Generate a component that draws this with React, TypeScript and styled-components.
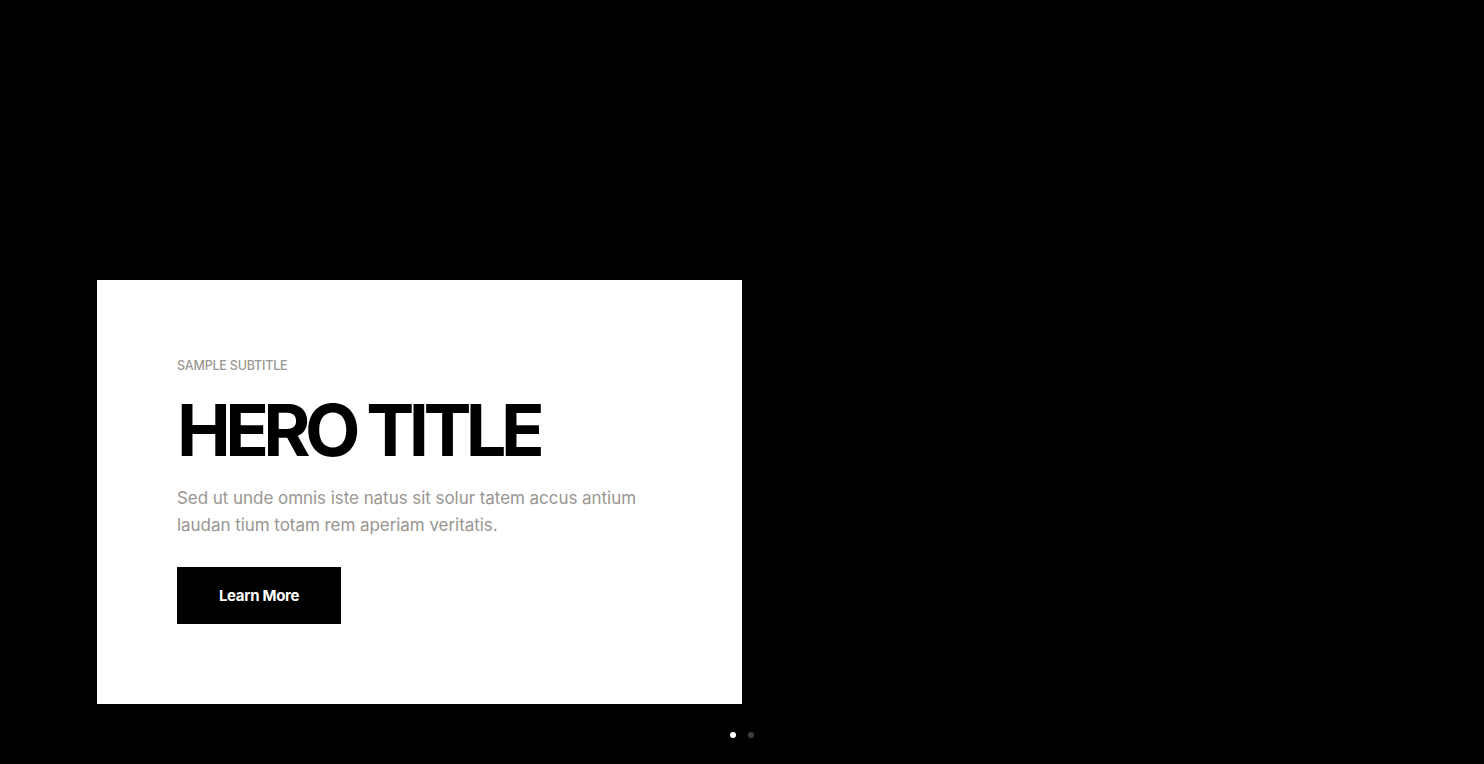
import React from "react";
import styled, { createGlobalStyle } from "styled-components";

const Global = createGlobalStyle`
  html, body { margin: 0; padding: 0; background: #000; }
  body { font-family: Inter, "Noto Sans", Arial, sans-serif; }
  * { box-sizing: border-box; }
`;

const Hero = styled.section`
  width: 1484px;
  height: 764px;
  background: #000;
  display: flex;
  flex-direction: column;
  padding: 280px 0 0 97px;
`;

const Card = styled.div`
  width: 645px;
  height: 424px;
  background: #fff;
  padding: 79px 80px 0 80px;
  display: flex;
  flex-direction: column;
  align-items: flex-start;
`;

const Subtitle = styled.div`
  font-size: 12.5px;
  font-weight: 500;
  color: #9a9794;
  text-transform: uppercase;
  letter-spacing: -0.2px;
  line-height: 14px;
`;

const Title = styled.h1`
  margin: 17px 0 0 0;
  font-size: 72px;
  font-weight: 700;
  line-height: 80px;
  letter-spacing: -5.6px;
  color: #000;
`;

const Text = styled.p`
  margin: 15px 0 0 0;
  font-size: 17px;
  line-height: 27px;
  color: #9a9591;
  width: 480px;
  letter-spacing: -0.05px;
`;

const Button = styled.button`
  margin-top: 28px;
  width: 164px;
  height: 57px;
  background: #000;
  color: #fff;
  border: none;
  font-family: inherit;
  font-size: 15px;
  font-weight: 700;
  letter-spacing: -0.3px;
  cursor: pointer;
`;

const Dots = styled.div`
  display: flex;
  gap: 12px;
  margin: 28px 0 0 633px;
`;

const Dot = styled.span<{ $active?: boolean }>`
  width: 6px;
  height: 6px;
  border-radius: 50%;
  background: ${(p) => (p.$active ? "#fff" : "#3d3d3d")};
`;

export default function App() {
  return (
    <>
      <Global />
      <Hero>
        <Card>
          <Subtitle>Sample Subtitle</Subtitle>
          <Title>HERO TITLE</Title>
          <Text>
            Sed ut unde omnis iste natus sit solur tatem accus antium laudan tium totam rem aperiam veritatis.
          </Text>
          <Button>Learn More</Button>
        </Card>
        <Dots>
          <Dot $active />
          <Dot />
        </Dots>
      </Hero>
    </>
  );
}
